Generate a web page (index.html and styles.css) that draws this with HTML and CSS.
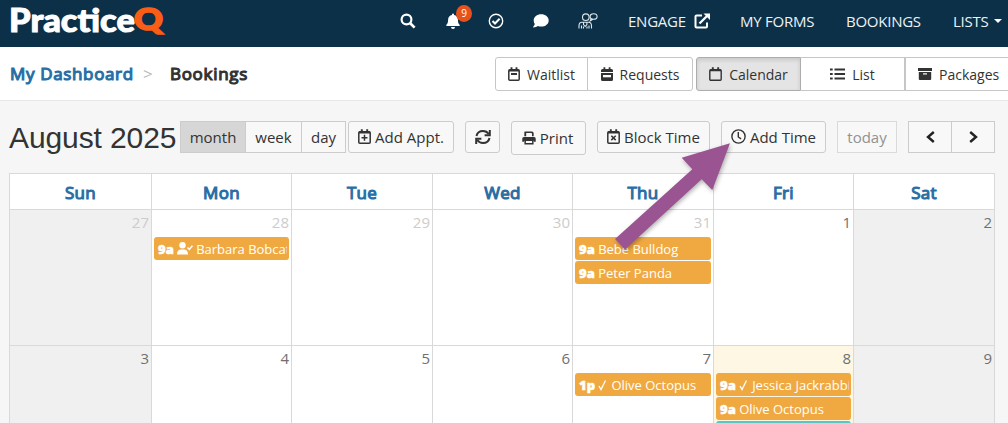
FILE: index.html
```html
<!DOCTYPE html>
<html lang="en">
<head>
  <meta charset="UTF-8" />
  <meta name="viewport" content="width=device-width, initial-scale=1.0"/>
  <title>PracticeQ - Bookings</title>
  <link rel="stylesheet" href="styles.css">
</head>
<body>
  <header class="navbar">
    <svg class="logo" width="160" height="40" viewBox="0 0 160 40">
      <text class="logo-text" x="-1" y="32" textLength="126" lengthAdjust="spacingAndGlyphs">Practice</text>
      <text class="logo-q" x="124" y="30" textLength="29" lengthAdjust="spacingAndGlyphs">Q</text>
    </svg>
    <nav class="nav-items">
      <a class="nav-icon search">
        <svg width="16" height="16" viewBox="0 0 16 16" fill="none" stroke="#fff" stroke-width="2.2"><circle cx="6.5" cy="6.5" r="4.9"/><path d="M10 10l4.6 4.6" stroke-width="2.7"/></svg>
      </a>
      <a class="nav-icon bell">
        <svg width="14" height="16" viewBox="0 0 14 16" fill="#fff"><path d="M6 1.5a1 1 0 0 1 2 0v.4c2.500.5 3.900 2.400 3.900 4.800 0 2.900.7 4 1.700 5 .5.6.2 1.300-.6 1.300H1c-.8 0-1.100-.7-.6-1.300 1-1 1.700-2.100 1.700-5 0-2.400 1.400-4.300 3.900-4.800zM5 14h4a2 2 0 0 1-4 0z"/></svg>
        <span class="badge">9</span>
      </a>
      <a class="nav-icon tasks">
        <svg width="16" height="16" viewBox="0 0 16 16" fill="none" stroke="#fff"><circle cx="8" cy="8" r="6.700" stroke-width="1.400"/><path d="M4.500 8l2.500 2.500 4.600-4.700" stroke-width="2"/></svg>
      </a>
      <a class="nav-icon chat">
        <svg width="16" height="14" viewBox="0 0 16 14" fill="#fff"><path d="M8.200.3c4.200 0 7.500 2.700 7.500 6.100s-3.300 6.200-7.500 6.200c-1.200 0-2.300-.2-3.300-.6-1.100.8-2.600 1.400-4.400 1.400-.4 0-.5-.4-.3-.7.700-.7 1.300-1.700 1.600-2.700C1 8.900.7 7.700.7 6.400.7 3 4 .3 8.200.3z"/></svg>
      </a>
      <a class="nav-icon group">
        <svg width="20" height="16" viewBox="0 0 20 16" fill="none" stroke="#dfe7ec" stroke-width="1.100"><circle cx="7.800" cy="4.200" r="3.300"/><ellipse cx="15.600" cy="3.500" rx="3.500" ry="2.800"/><path d="M13.300 5.500l-1 2.300 2.500-1.500M1 15.500V13c0-2.500 1-3.700 3-3.700h6.500c2 0 3 1.200 3 3.700v2.500M3.500 15.500v-3M11 15.500v-3M5.500 9.500v2l1.700 2 1.700-2v-2M5.500 15.500v-2M9 15.500v-2"/></svg>
      </a>
      <a class="nav-link engage"><span>ENGAGE</span>
        <svg width="17" height="16" viewBox="0 0 17 16" fill="none" stroke="#fff" stroke-width="2"><path d="M8 2.500H2.500q-1 0-1 1v10q0 1 1 1h9.500q1 0 1-1V9.500"/><path d="M5.500 10.500l8.500-8.500" stroke-width="2.300"/><path d="M9.500.5h6.500V7z" fill="#fff" stroke="none"/></svg>
      </a>
      <a class="nav-link forms">MY FORMS</a>
      <a class="nav-link bookings">BOOKINGS</a>
      <a class="nav-link lists">LISTS <i class="caret"></i></a>
    </nav>
  </header>

  <div class="subbar">
    <div class="breadcrumb">
      <a class="crumb-link">My Dashboard</a>
      <span class="sep">&gt;</span>
      <span class="crumb-current">Bookings</span>
    </div>
    <div class="tabs">
      <a class="tab waitlist">
        <svg width="12" height="14" viewBox="0 0 12 14" fill="none" stroke="#333" stroke-width="1.500"><rect x=".8" y="2.800" width="10.400" height="10.400" rx="1"/><path d="M1 3.600h10M3.500.3v3M8.500.3v3M3 7h6" stroke-width="1.900"/></svg>
        <span>Waitlist</span>
      </a>
      <a class="tab requests">
        <svg width="12" height="14" viewBox="0 0 12 14" fill="#333"><path d="M2.500.3h1.800V2h3.400V.3h1.800V2h1q1.500 0 1.500 1.500V5H0V3.500Q0 2 1.500 2h1zM0 6h12v6.500q0 1.500-1.500 1.500h-9Q0 14 0 12.500z"/><path d="M2 8h8v2.300H2z" fill="#fff"/></svg>
        <span>Requests</span>
      </a>
      <a class="tab calendar">
        <svg width="13" height="14" viewBox="0 0 13 14" fill="none" stroke="#333" stroke-width="1.400"><rect x=".8" y="2.800" width="11.400" height="10.400" rx="1"/><path d="M1 3.400h11M3.800.3v3M9.200.3v3" stroke-width="1.900"/></svg>
        <span>Calendar</span>
      </a>
      <a class="tab list">
        <svg width="15" height="12" viewBox="0 0 15 12" stroke="#333" stroke-width="1.800"><path d="M0 1.500h2.700M4.500 1.500H15M0 6h2.700M4.500 6H15M0 10.500h2.700M4.500 10.500H15"/></svg>
        <span>List</span>
      </a>
      <a class="tab packages">
        <svg width="14" height="12" viewBox="0 0 14 12" fill="#333"><path d="M0 0h14v3H0zM.8 4h12.400v7q0 1-1 1H1.800q-1 0-1-1z"/><path d="M5 5.300h4v1.200H5z" fill="#fff"/></svg>
        <span>Packages</span>
      </a>
    </div>
  </div>

  <main class="content">
    <div class="toolbar">
      <h1>August 2025</h1>
      <div class="btn-group">
        <button class="btn month">month</button>
        <button class="btn week">week</button>
        <button class="btn day">day</button>
      </div>
      <button class="btn round add-appt">
        <svg width="13" height="15" viewBox="0 0 13 15" fill="none" stroke="#333" stroke-width="1.500"><rect x=".8" y="2.800" width="11.400" height="11.400" rx="1"/><path d="M1 3.500h11M3.800.3v3M9.200.3v3" stroke-width="1.900"/><path d="M6.500 5.800v6M3.500 8.800h6"/></svg>
        <span>Add Appt.</span>
      </button>
      <button class="btn round refresh">
        <svg width="16" height="16" viewBox="0 0 16 16" fill="none" stroke="#333" stroke-width="2"><path d="M1.500 7C2.200 3.800 4.800 2 8 2c2.500 0 4.500 1.200 5.700 3"/><path d="M14.800 1v5.200H9.600"/><path d="M14.500 9c-.7 3.200-3.300 5-6.500 5-2.500 0-4.500-1.200-5.700-3"/><path d="M1.200 15V9.800h5.200"/></svg>
      </button>
      <button class="btn round print">
        <svg width="14" height="14" viewBox="0 0 15 14" fill="#333"><path d="M3 0h8l1.500 1.500V5h-1.800V2.200L10 1.700H4.500V5H2.500V.5zM2 6h11q1.700 0 1.700 1.700V11h-2v-1H2.300v1h-2V7.700Q.3 6 2 6z"/><path d="M3.400 9.500h8.200v3.700H3.400z" fill="none" stroke="#333" stroke-width="1.600"/></svg>
        <span>Print</span>
      </button>
      <button class="btn round block">
        <svg width="13" height="15" viewBox="0 0 13 15" fill="none" stroke="#333" stroke-width="1.500"><rect x=".8" y="2.800" width="11.400" height="11.400" rx="1"/><path d="M1 3.500h11M3.800.3v3M9.200.3v3" stroke-width="1.900"/><path d="M4.300 6.700l4.400 4.400M8.700 6.700l-4.400 4.400"/></svg>
        <span>Block Time</span>
      </button>
      <button class="btn round add-time">
        <svg width="15" height="15" viewBox="0 0 15 15" fill="none" stroke="#333" stroke-width="1.400"><circle cx="7.500" cy="7.500" r="6.600"/><path d="M7.300 3v5l2.800 1.900"/></svg>
        <span>Add Time</span>
      </button>
      <button class="btn today">today</button>
      <div class="btn-group pager">
        <button class="btn prev"><svg width="9" height="12" viewBox="0 0 9 12" fill="none" stroke="#222" stroke-width="2.400"><path d="M7.800 1L2 6l5.800 5"/></svg></button>
        <button class="btn next"><svg width="9" height="12" viewBox="0 0 9 12" fill="none" stroke="#222" stroke-width="2.400"><path d="M1.200 1L7 6l-5.800 5"/></svg></button>
      </div>
    </div>

    <div class="month-grid">
      <div class="head">Sun</div>
      <div class="head">Mon</div>
      <div class="head">Tue</div>
      <div class="head">Wed</div>
      <div class="head">Thu</div>
      <div class="head">Fri</div>
      <div class="head">Sat</div>

      <div class="cell weekend other"><div class="num">27</div></div>
      <div class="cell other"><div class="num">28</div>
        <div class="event"><b>9a</b><svg class="user-check" width="16" height="13" viewBox="0 0 16 13" fill="#fff"><circle cx="5.500" cy="3.200" r="3.200"/><path d="M0 12.500c0-3.400 1.500-5 4-5h3c2.500 0 4 1.600 4 5z"/><path d="M10.500 5.500l1.800 1.800 3.200-3.600" fill="none" stroke="#fff" stroke-width="1.500"/></svg><span>Barbara Bobcat</span></div>
      </div>
      <div class="cell other"><div class="num">29</div></div>
      <div class="cell other"><div class="num">30</div></div>
      <div class="cell other"><div class="num">31</div>
        <div class="event"><b>9a</b><span>Bebe Bulldog</span></div>
        <div class="event"><b>9a</b><span>Peter Panda</span></div>
      </div>
      <div class="cell"><div class="num">1</div></div>
      <div class="cell weekend"><div class="num">2</div></div>

      <div class="cell weekend"><div class="num">3</div></div>
      <div class="cell"><div class="num">4</div></div>
      <div class="cell"><div class="num">5</div></div>
      <div class="cell"><div class="num">6</div></div>
      <div class="cell"><div class="num">7</div>
        <div class="event"><b>1p</b><svg class="tick" width="9" height="12" viewBox="0 0 9 12" fill="none" stroke="#fff" stroke-width="1.300"><path d="M1 7l2 3.500L7.500 1.500"/></svg><span>Olive Octopus</span></div>
      </div>
      <div class="cell current"><div class="num">8</div>
        <div class="event"><b>9a</b><svg class="tick" width="9" height="12" viewBox="0 0 9 12" fill="none" stroke="#fff" stroke-width="1.300"><path d="M1 7l2 3.500L7.500 1.500"/></svg><span>Jessica Jackrabbi</span></div>
        <div class="event"><b>9a</b><span>Olive Octopus</span></div>
        <div class="event teal"></div>
      </div>
      <div class="cell weekend"><div class="num">9</div></div>
    </div>
  </main>

  <!-- pointer to the Add Time button -->
  <svg class="arrow" width="130" height="120" viewBox="606 136 130 120"><path d="M730 143.300L681.700 157.700L692.300 169.300L615 239L625 249.500L701.700 179.300L712.300 190Z"/></svg>
</body>
</html>
```
FILE: styles.css
```css
* {
  box-sizing: border-box;
}
body {
  margin: 0;
  height: 423px;
  overflow: hidden;
  position: relative;
  background: #f6f6f6;
  color: #333;
  font-family: "Open Sans", sans-serif;
  font-size: 14px;
}
svg {
  display: block;
  flex: none;
}

/* top navigation */
.navbar {
  display: flex;
  height: 47px;
  background: #0b3048;
}
.logo {
  margin-left: 10px;
  overflow: visible;
}
.logo-text, .logo-q {
  font-family: Lato, sans-serif;
  font-weight: 900;
  font-size: 33px;
  fill: #fff;
  stroke: #fff;
  stroke-width: 1px;
}
.logo-q {
  font-size: 30px;
  fill: #f95d16;
  stroke: #f95d16;
  stroke-width: 1.6px;
}
.nav-items {
  display: flex;
  flex: 1;
  align-items: center;
  height: 42px;
  margin-left: 230px;
}
.nav-icon {
  position: relative;
  flex: none;
}
.bell {
  margin-left: 30px;
}
.tasks {
  margin-left: 28px;
}
.chat {
  margin-left: 29px;
}
.group {
  margin-left: 29px;
}
.badge {
  position: absolute;
  left: 10px;
  top: -8px;
  width: 16px;
  height: 17px;
  border-radius: 50%;
  background: #e9511b;
  color: #fff;
  font-size: 10px;
  line-height: 17px;
  text-align: center;
}
.nav-link {
  display: flex;
  align-items: center;
  flex: none;
  color: #eef2f4;
  font-size: 15px;
  letter-spacing: -0.25px;
  white-space: nowrap;
}
.engage {
  width: 112px;
  margin-left: 30px;
  gap: 8px;
}
.forms {
  width: 106px;
}
.bookings {
  width: 107px;
}
.caret {
  margin-left: 6px;
  border-left: 4px solid transparent;
  border-right: 4px solid transparent;
  border-top: 4px solid #fff;
}

/* breadcrumb and view tabs */
.subbar {
  display: flex;
  height: 54px;
  background: #fff;
  border-bottom: 1px solid #e7e7e7;
}
.breadcrumb {
  display: flex;
  flex: none;
  align-items: center;
  width: 495px;
  padding-left: 10px;
  font-size: 17px;
  letter-spacing: 0.08px;
}
.crumb-link {
  width: 133px;
  color: #296fa5;
  letter-spacing: 0.65px;
  -webkit-text-stroke: 1.1px #296fa5;
}
.sep {
  width: 27px;
  color: #bbb;
}
.crumb-current {
  letter-spacing: 0.7px;
  -webkit-text-stroke: 1.1px #333;
}
.tabs {
  display: flex;
  flex: none;
  width: 513px;
  padding-top: 10px;
  overflow: hidden;
}
.tab {
  display: flex;
  align-items: center;
  justify-content: center;
  flex: none;
  height: 34px;
  gap: 7px;
  border: 1px solid #c6c6c6;
  background: #fff;
  font-size: 14px;
}
.waitlist {
  width: 93px;
  border-radius: 3px 0 0 3px;
}
.requests {
  width: 106px;
  margin-left: -1px;
  border-radius: 0 3px 3px 0;
}
.calendar {
  width: 105px;
  margin-left: 3px;
  background: #e4e4e4;
  border-color: #adadad;
  border-radius: 3px 0 0 3px;
  box-shadow: inset 0 2px 4px rgba(0, 0, 0, 0.13);
}
.list {
  width: 104px;
  border-left: 0;
}
.packages {
  width: 110px;
  margin-left: 0;
  justify-content: flex-start;
  padding-left: 12px;
}

/* calendar toolbar */
.content {
  padding: 20px 0 0 9px;
}
.toolbar {
  display: flex;
  align-items: flex-start;
  height: 52px;
}
h1 {
  width: 171px;
  margin: 0;
  font-family: "Liberation Sans", Arial, sans-serif;
  font-weight: 400;
  font-size: 30px;
  letter-spacing: -0.1px;
  line-height: 33px;
  white-space: nowrap;
}
.btn-group {
  display: flex;
}
.btn {
  display: flex;
  align-items: center;
  justify-content: center;
  flex: none;
  height: 32px;
  margin: 0;
  padding: 0 0 1px;
  gap: 4px;
  border: 1px solid #ccc;
  background: #f8f8f8;
  color: #333;
  font-family: inherit;
  font-size: 15px;
  white-space: nowrap;
}
.round {
  border-radius: 3px;
}
.month {
  width: 66px;
  background: #d6d6d6;
}
.week {
  width: 57px;
  margin-left: -1px;
}
.day {
  width: 45px;
  margin-left: -1px;
}
.add-appt {
  width: 106px;
  margin-left: 2px;
}
.refresh {
  width: 35px;
  margin-left: 11px;
}
.print {
  width: 75px;
  height: 34px;
  margin-left: 11px;
  padding-right: 2px;
}
.block {
  width: 113px;
  margin-left: 11px;
}
.add-time {
  width: 105px;
  margin-left: 11px;
}
.today {
  width: 60px;
  margin-left: 11px;
  border-color: #dadada;
  color: #929292;
}
.pager {
  margin-left: 11px;
}
.prev {
  width: 44px;
}
.next {
  width: 44px;
  margin-left: -1px;
}

/* month view */
.month-grid {
  display: grid;
  grid-template-columns: 142px 140px 141px 140px 141px 140px 141px;
  grid-template-rows: 36px 136px 78px;
  width: 986px;
  border-left: 1px solid #d9d9d9;
  background: #fff;
}
.head, .cell {
  min-width: 0;
  border-top: 1px solid #d9d9d9;
  border-right: 1px solid #d9d9d9;
}
.head {
  color: #296fa5;
  font-size: 17px;
  letter-spacing: 0.3px;
  line-height: 38px;
  text-align: center;
  -webkit-text-stroke: 1.1px #296fa5;
}
.cell {
  padding: 0 2px;
  overflow: hidden;
}
.weekend {
  background: #f0f0f0;
}
.current {
  background: #fdf7e3;
}
.num {
  height: 27px;
  color: #707070;
  font-size: 15px;
  line-height: 25px;
  text-align: right;
}
.other .num {
  color: #ccc;
}
.event {
  display: flex;
  align-items: center;
  height: 23px;
  margin-bottom: 1px;
  padding-left: 4px;
  border-right: 2px solid #f0a941;
  border-radius: 3px;
  background: #f0a941;
  color: #fff;
  font-size: 13px;
  white-space: nowrap;
  overflow: hidden;
}
.event b {
  margin-right: 3px;
  font-weight: 800;
  letter-spacing: 0.2px;
  -webkit-text-stroke: 0.5px #fff;
}
.user-check {
  margin-right: 3px;
}
.tick {
  margin-right: 4px;
}
.teal {
  border-color: #5bc5c5;
  background: #5bc5c5;
}

.arrow {
  position: absolute;
  left: 606px;
  top: 136px;
  fill: #9b5492;
  filter: drop-shadow(1px 2px 2px rgba(0, 0, 0, 0.3));
}
```
